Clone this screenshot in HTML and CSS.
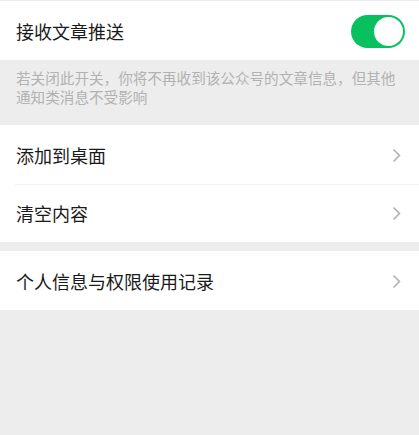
FILE: index.html
```html
<html>
	<head>
		<title>文章推送设置</title>
		<link rel="stylesheet" href="styles.css">
	</head>
	<body>
		<div class="page">
			<div class="group top">
				<div class="row">
					<span class="label">接收文章推送</span>
					<span class="switch on"><span class="knob"></span></span>
				</div>
			</div>
			<div class="tip">若关闭此开关，你将不再收到该公众号的文章信息，但其他通知类消息不受影响</div>
			<div class="group">
				<div class="row">
					<span class="label">添加到桌面</span>
					<svg class="arrow" width="9" height="15" viewBox="0 0 9 15"><path d="M1.5 1.5 L7.5 7.5 L1.5 13.5" fill="none" stroke="#b2b2b2" stroke-width="1.6"/></svg>
				</div>
				<div class="row line">
					<span class="label">清空内容</span>
					<svg class="arrow" width="9" height="15" viewBox="0 0 9 15"><path d="M1.5 1.5 L7.5 7.5 L1.5 13.5" fill="none" stroke="#b2b2b2" stroke-width="1.6"/></svg>
				</div>
			</div>
			<div class="group gap">
				<div class="row">
					<span class="label">个人信息与权限使用记录</span>
					<svg class="arrow" width="9" height="15" viewBox="0 0 9 15"><path d="M1.5 1.5 L7.5 7.5 L1.5 13.5" fill="none" stroke="#b2b2b2" stroke-width="1.6"/></svg>
				</div>
			</div>
		</div>
	</body>
</html>
```
FILE: styles.css
```css
*{
	margin:0px;
	padding:0px;
	box-sizing:border-box;
}
body{
	background-color:#ededed;
	font-family:"Noto Sans CJK SC", "Liberation Sans", sans-serif;
}
.page{
	width:419px;
	height:435px;
	padding-top:1px;
}
.group{
	background-color:#ffffff;
	padding-top:1px;
}
.gap{
	margin-top:9px;
}
.row{
	height:58px;
	display:flex;
	align-items:center;
	justify-content:space-between;
	padding-left:16px;
	padding-right:16px;
	position:relative;
}
.line::before{
	content:"";
	position:absolute;
	left:15px;
	right:0px;
	top:0px;
	height:1px;
	background-color:#f2f2f2;
}
.label{
	font-size:18px;
	color:#1a1a1a;
}
.tip{
	padding:8px 10px 16px 16px;
	font-size:14.6px;
	line-height:19px;
	color:#b2b2b2;
	height:65px;
}
.switch{
	width:54px;
	height:33px;
	border-radius:17px;
	background-color:#07c160;
	position:relative;
	margin-right:-2px;
}
.knob{
	position:absolute;
	right:2px;
	top:2px;
	width:29px;
	height:29px;
	border-radius:50%;
	background-color:#ffffff;
}
.arrow{
	margin-right:2px;
}
```
